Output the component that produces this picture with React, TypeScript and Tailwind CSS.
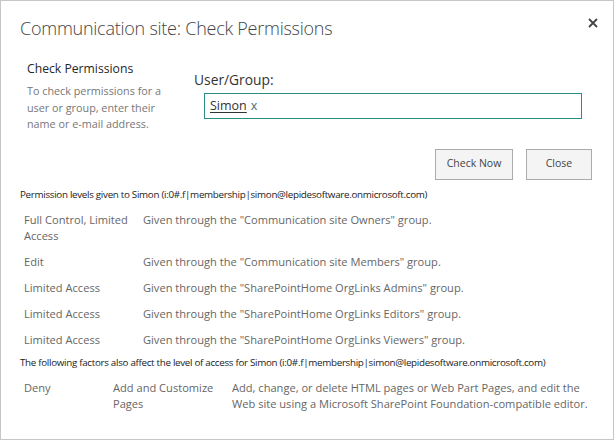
import React from "react";

const font = { fontFamily: "'Open Sans', 'Segoe UI', sans-serif" };

const rows: [string, string][] = [
  ["Full Control, Limited Access", 'Given through the "Communication site Owners" group.'],
  ["Edit", 'Given through the "Communication site Members" group.'],
  ["Limited Access", 'Given through the "SharePointHome OrgLinks Admins" group.'],
  ["Limited Access", 'Given through the "SharePointHome OrgLinks Editors" group.'],
  ["Limited Access", 'Given through the "SharePointHome OrgLinks Viewers" group.'],
];

export default function App() {
  return (
    <div className="w-[614px] h-[441px] bg-white" style={font}>
      <div className="relative w-[614px] h-[440px] border border-[#c6c6c6] bg-white">
        <button className="absolute right-[14px] top-[16px] w-[12px] h-[12px] flex items-center justify-center">
          <svg width="10" height="10" viewBox="0 0 10 10">
            <path d="M1 1 L9 9 M9 1 L1 9" stroke="#444" strokeWidth="1.8" />
          </svg>
        </button>
        <div className="pl-[19px] pt-[13px] h-[50px]">
          <h1 className="text-[18px] leading-[28px] font-light text-[#444] tracking-[-0.25px]">
            Communication site: Check Permissions
          </h1>
        </div>
        <div className="flex pt-[9px]">
          <div className="w-[193px] pl-[26px] shrink-0">
            <div className="text-[12.2px] leading-[18px] text-[#262626]">Check Permissions</div>
            <div className="mt-[5px] w-[142px] text-[10.8px] leading-[16.5px] text-[#777]">
              To check permissions for a user or group, enter their name or e-mail address.
            </div>
          </div>
          <div className="w-[400px] pt-[11px] flex flex-col items-start">
            <label className="block text-[13.8px] leading-[18px] text-[#333]">User/Group:</label>
            <div className="pl-[10px] mt-[4px]">
              <div className="w-[378px] h-[26px] border border-[#2a8d87] flex items-center pl-[5px] text-[12.5px] text-[#333]">
                <span className="underline underline-offset-2">Simon</span>
                <span className="ml-[4px] text-[#4b6a7a]">x</span>
              </div>
            </div>
          </div>
        </div>
        <div className="flex justify-end gap-[13px] pr-[21px] mt-[16px]">
          <button className="w-[78px] h-[31px] border border-[#ababab] bg-[#f4f4f4] text-[10.5px] text-[#444]">
            Check Now
          </button>
          <button className="w-[66px] h-[31px] border border-[#ababab] bg-[#f4f4f4] text-[10.5px] text-[#444]">
            Close
          </button>
        </div>
        <div className="pl-[19px] mt-[7px] text-[9.8px] leading-[16px] text-[#222] tracking-[-0.3px]">
          Permission levels given to Simon (i:0#.f|membership|simon@lepidesoftware.onmicrosoft.com)
        </div>
        <div className="pl-[23px] mt-[4px]">
          {rows.map(([a, b], i) => (
            <div key={i} className="flex py-[5px] text-[11.1px] leading-[16px] text-[#666]">
              <div className="w-[119px] shrink-0 pr-[6px]">{a}</div>
              <div>{b}</div>
            </div>
          ))}
        </div>
        <div className="pl-[19px] mt-[2px] text-[9.8px] leading-[16px] text-[#222] tracking-[-0.3px]">
          The following factors also affect the level of access for Simon (i:0#.f|membership|simon@lepidesoftware.onmicrosoft.com)
        </div>
        <div className="pl-[23px] mt-[4px] flex py-[5px] text-[11.1px] leading-[16px] text-[#666]">
          <div className="w-[89px] shrink-0">Deny</div>
          <div className="w-[119px] shrink-0 pr-[6px]">Add and Customize Pages</div>
          <div className="w-[366px]">
            Add, change, or delete HTML pages or Web Part Pages, and edit the Web site using a Microsoft SharePoint Foundation-compatible editor.
          </div>
        </div>
      </div>
    </div>
  );
}
